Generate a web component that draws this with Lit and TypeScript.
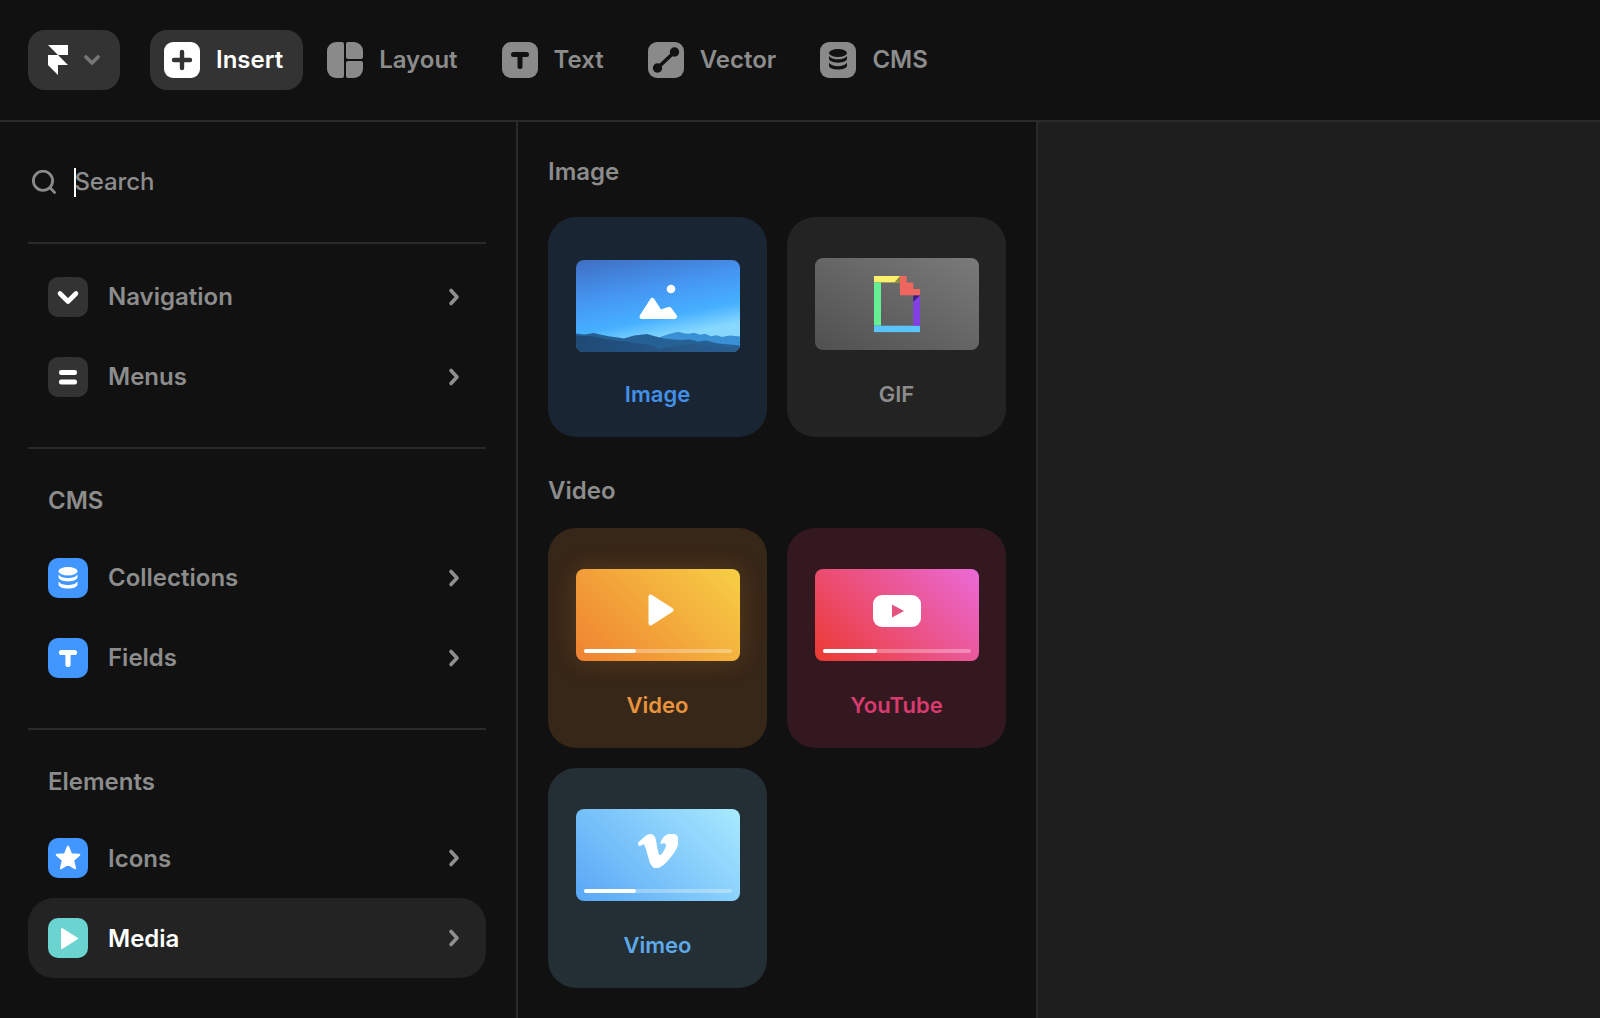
import { LitElement, html, css, svg } from "lit";
import { customElement } from "lit/decorators.js";

const db = svg`<ellipse cx="10" cy="4.2" rx="9.5" ry="4.2"/><path d="M.5 7.4C2 9.8 6 10.9 10 10.9S18 9.8 19.5 7.4V10.3C19.5 12.7 15 14.4 10 14.4S.5 12.7 .5 10.3Z"/><path d="M.5 14.6C2 17 6 18.1 10 18.1S18 17 19.5 14.6V17.5C19.5 19.9 15 21.6 10 21.6S.5 19.9 .5 17.5Z"/>`;
const dbIcon = (w: number, h: number) => html`<svg width=${w} height=${h} viewBox="0 0 20 22" fill="currentColor">${db}</svg>`;

const chevron = html`<svg class="chev" width="14" height="20" viewBox="0 0 14 20" fill="none" stroke="#8f8f8f" stroke-width="3.6" stroke-linecap="round" stroke-linejoin="round"><path d="M4 3.5l6 6.5-6 6.5"/></svg>`;

interface Row { label: string; tone: string; icon: unknown; active?: boolean }

const navIcon = html`<svg width="40" height="40" viewBox="0 0 40 40" fill="none" stroke="#fff" stroke-width="4.6" stroke-linecap="round" stroke-linejoin="round"><path d="M12 16.5l8 8 8-8"/></svg>`;
const menuIcon = html`<svg width="40" height="40" viewBox="0 0 40 40" fill="#fff"><rect x="11" y="13" width="18" height="5" rx="2.2"/><rect x="11" y="22.5" width="18" height="5" rx="2.2"/></svg>`;
const tIcon = html`<svg width="40" height="40" viewBox="0 0 40 40" fill="none" stroke="#fff" stroke-width="5.2" stroke-linecap="round"><path d="M13.5 14.5h13M20 14.5v12"/></svg>`;
const starIcon = html`<svg width="28" height="28" viewBox="0 0 24 24" fill="#fff" stroke="#fff" stroke-width="2" stroke-linejoin="round"><path d="M12 2.5l2.65 6.36 6.86.55-5.23 4.48 1.6 6.7L12 17l-5.88 3.59 1.6-6.7L2.49 9.41l6.86-.55z"/></svg>`;
const playIcon = html`<svg width="40" height="40" viewBox="0 0 40 40" fill="#fff" stroke="#fff" stroke-width="2" stroke-linejoin="round"><path d="M14 11v19l15-9.5z"/></svg>`;

const groups: { title?: string; rows: Row[] }[] = [
  { rows: [
    { label: "Navigation", tone: "dark", icon: navIcon },
    { label: "Menus", tone: "dark", icon: menuIcon },
  ] },
  { title: "CMS", rows: [
    { label: "Collections", tone: "blue", icon: dbIcon(20, 22) },
    { label: "Fields", tone: "blue", icon: tIcon },
  ] },
  { title: "Elements", rows: [
    { label: "Icons", tone: "blue", icon: starIcon },
    { label: "Media", tone: "teal", icon: playIcon, active: true },
  ] },
];

const imageArt = html`<svg class="art" viewBox="0 0 164 92" width="164" height="92">
  <defs>
    <linearGradient id="sky" x1="0" y1="0" x2="0.35" y2="1">
      <stop offset="0" stop-color="#3f6fc2"/><stop offset="0.42" stop-color="#4596f2"/><stop offset="0.72" stop-color="#46b0ff"/><stop offset="0.92" stop-color="#86d8ff"/>
    </linearGradient>
    <linearGradient id="front" x1="0" y1="0" x2="1" y2="0">
      <stop offset="0" stop-color="#1f4a76"/><stop offset="1" stop-color="#2a5f92"/>
    </linearGradient>
  </defs>
  <rect width="164" height="92" fill="url(#sky)"/>
  <path fill="#3a90d4" d="M84 77l9-3 9-2.300 6 1.500 5 .5 5-1 6 2 5-1 6 2.500 6-1 5 1.800 8-1.500 10 1V92H84z"/>
  <path fill="#266196" d="M0 73.500l8 1 10-1.500 6 1.500 10 2 8 1 6 1 10-3 13-1.500 7 2 10 2.500 9 1 7 .5 10-.5 8 2 8-1 12 3 22 2V92H0z"/>
  <path fill="url(#front)" d="M0 75.500l18 1 12 2.500 14 2 16 2 14 2 10 4 10-2 14-2 12-1 12 2 18 1 14-.5V92H0z"/>
  <path fill="#fff" stroke="#fff" stroke-width="5" stroke-linejoin="round" d="M66 56.500L76.300 40.500 84 52.500 93.300 49.500 98.500 56.500z"/>
  <circle cx="95" cy="29" r="4.300" fill="#fff"/>
</svg>`;

const gifArt = html`<svg class="art" viewBox="0 0 164 92" width="164" height="92">
  <defs>
    <linearGradient id="gifbg" x1="0" y1="1" x2="1" y2="0">
      <stop offset="0" stop-color="#505050"/><stop offset="1" stop-color="#7a7a7a"/>
    </linearGradient>
  </defs>
  <rect width="164" height="92" fill="url(#gifbg)"/>
  <rect x="59" y="18" width="26" height="6.400" fill="#fdf06a"/>
  <path d="M79.500 24.400L85 18v6.400z" fill="#8f8a3c"/>
  <rect x="59" y="24.400" width="7" height="43.300" fill="#66ee92"/>
  <rect x="59" y="67.700" width="46" height="6.400" fill="#5ac4ff"/>
  <rect x="98.300" y="37.300" width="6.700" height="30.400" fill="#8240e4"/>
  <path d="M98.300 43.800l6.700-6.500h-6.700z" fill="#3b1a7a"/>
  <path d="M85 18h6.700v6.400h6.600v6.500h6.700v6.400H85z" fill="#ef665f"/>
</svg>`;

const bar = (pct: number) => html`<div class="track"><div class="fill" style="width:${pct}%"></div></div>`;

const videoArt = html`<svg class="glyph play" width="26" height="32" viewBox="0 0 26 32" fill="#fff" stroke="#fff" stroke-width="4" stroke-linejoin="round"><path d="M2.500 2.500v27L23.500 16z"/></svg>${bar(35.500)}`;
const ytArt = html`<svg class="glyph yt" width="48" height="32" viewBox="0 0 48 32"><rect width="48" height="32" rx="9" fill="#fff"/><path d="M19 9.500v13L31 16z" fill="#e4527f"/></svg>${bar(36.500)}`;
const vimeoArt = html`<svg class="glyph" width="40" height="34" viewBox="0 1.500 24 21" fill="#fff" stroke="#fff" stroke-width="0.700" stroke-linejoin="round" preserveAspectRatio="none"><path d="M23.9765 6.4168c-.105 2.338-1.739 5.5429-4.894 9.6088-3.2679 4.247-6.0258 6.3699-8.2898 6.3699-1.409 0-2.578-1.294-3.553-3.881l-1.9179-7.1138c-.719-2.584-1.488-3.878-2.312-3.878-.179 0-.806.378-1.8809 1.132L0 7.2098c1.1811-1.0381 2.3451-2.0801 3.501-3.1279C5.08 2.7175 6.2696 1.9964 7.0616 1.9244c1.8679-.18 3.0179 1.1 3.4508 3.8387.4659 2.9541.7889 4.7921.9699 5.5131.5389 2.45 1.1309 3.674 1.7779 3.674.502 0 1.2569-.796 2.2649-2.385 1.004-1.589 1.5429-2.797 1.6149-3.628.144-1.371-.395-2.061-1.6149-2.061-.574 0-1.167.121-1.777.391 1.186-3.8679 3.434-5.7568 6.7619-5.6368 2.4729.06 3.6279 1.664 3.4979 4.7828z"/></svg>${bar(35.500)}`;

const plusIcon = html`<svg width="36" height="36" viewBox="0 0 36 36" fill="none"><rect width="36" height="36" rx="9" fill="#fff"/><path d="M18 10v16M10 18h16" stroke="#333" stroke-width="4.400" stroke-linecap="round"/></svg>`;
const layoutIcon = html`<svg width="36" height="36" viewBox="0 0 36 36" fill="#8a8a8a"><path d="M9 0h6a2 2 0 0 1 2 2v32a2 2 0 0 1-2 2H9a9 9 0 0 1-9-9V9a9 9 0 0 1 9-9z"/><path d="M21 0h6a9 9 0 0 1 9 9v6a2 2 0 0 1-2 2H21a2 2 0 0 1-2-2V2a2 2 0 0 1 2-2z"/><path d="M21 19h13a2 2 0 0 1 2 2v6a9 9 0 0 1-9 9h-6a2 2 0 0 1-2-2V21a2 2 0 0 1 2-2z"/></svg>`;
const textIcon = html`<svg width="36" height="36" viewBox="0 0 36 36" fill="none"><rect width="36" height="36" rx="9" fill="#8a8a8a"/><path d="M11.500 12.500h13M18 12.500v12" stroke="#111" stroke-width="5" stroke-linecap="round"/></svg>`;
const vectorIcon = html`<svg width="36" height="36" viewBox="0 0 36 36" fill="none"><rect width="36" height="36" rx="9" fill="#8a8a8a"/><path d="M9 26.500L26.500 10" stroke="#111" stroke-width="3.600"/><circle cx="9.500" cy="26" r="4.700" fill="#111"/><circle cx="26.500" cy="10" r="4.700" fill="#111"/></svg>`;
const cmsIcon = html`<svg width="36" height="36" viewBox="0 0 36 36"><rect width="36" height="36" rx="9" fill="#8a8a8a"/><g transform="translate(8.500 7) scale(.95)" fill="#111">${db}</g></svg>`;

const tools = [
  { label: "Insert", icon: plusIcon, active: true },
  { label: "Layout", icon: layoutIcon },
  { label: "Text", icon: textIcon },
  { label: "Vector", icon: vectorIcon },
  { label: "CMS", icon: cmsIcon },
];

@customElement("app-root")
export class AppRoot extends LitElement {
  static styles = css`
    :host { display: block; width: 100%; height: 100vh; overflow: hidden; background: #111; color: #8c8c8c;
      font-family: Inter, "Liberation Sans", sans-serif; font-size: 24px; font-weight: 600; line-height: 30px; }
    svg { display: block; flex: none; }
    .topbar { display: flex; align-items: center; height: 120px; padding-left: 28px; border-bottom: 2px solid #2a2a2a; box-sizing: content-box; }
    .logo { display: flex; align-items: center; gap: 16px; width: 92px; height: 60px; box-sizing: border-box; padding-left: 20px; background: #333; border-radius: 17px; margin-right: 30px; }
    .tools { display: flex; align-items: center; gap: 10px; }
    .tool { display: flex; align-items: center; gap: 16px; height: 60px; padding: 0 20px 0 14px; border-radius: 17px; }
    .tool.on { background: #333; color: #fff; }
    .body { display: flex; height: calc(100vh - 122px); }
    .side { flex: none; padding: 0 30px 0 28px; border-right: 2px solid #2a2a2a; box-sizing: content-box; width: 458px; }
    .search { display: flex; align-items: center; height: 120px; padding-left: 4px; font-weight: 500; letter-spacing: -.15px; }
    .caret { width: 2px; height: 29px; background: #fff; margin-left: 18px; margin-right: -1.500px; }
    .group { border-top: 2px solid #2a2a2a; padding-bottom: 30px; }
    .group.first { padding-top: 13px; }
    .group-title { padding: 37px 0 22px 20px; }
    .group:last-child .group-title { padding-bottom: 21px; }
    .group:last-child .row span { padding-top: 2px; }
    .row { display: flex; align-items: center; height: 80px; padding: 0 25px 0 20px; border-radius: 26px; }
    .row.on { background: #232323; color: #fff; }
    .row span { flex: 1; }
    .ic { width: 40px; height: 40px; border-radius: 10px; margin-right: 20px; display: flex; align-items: center; justify-content: center; color: #fff; flex: none; }
    .ic.dark { background: #333; }
    .ic.blue { background: #4196ff; }
    .ic.teal { background: #6bd3d0; }
    .panel { width: 458px; flex: none; padding: 35px 30px 0; border-right: 2px solid #2a2a2a; }
    .panel-title.top { margin-bottom: 30px; }
    .panel-title.next { margin: 39px 0 22px; }
    .grid { display: grid; grid-template-columns: 219px 219px; gap: 20px; }
    .card { height: 220px; border-radius: 28px; display: flex; flex-direction: column; align-items: center; padding-top: 41px; box-sizing: border-box; font-size: 22px; line-height: 28px; }
    .thumb { width: 164px; height: 92px; border-radius: 8px; overflow: hidden; position: relative; display: flex; justify-content: center; flex: none; }
    .thumb .glyph { margin-top: 25px; }
    .thumb .glyph.play { margin-left: 6px; }
    .thumb .glyph.yt { margin-top: 26px; }
    .card .name { margin-top: 30px; }
    .card.image { background: #1a2533; color: #4390e8; padding-top: 43px; }
    .card.image .name { margin-top: 28px; }
    .card.gif { background: #232323; color: #8c8c8c; }
    .card.gif .name { margin-top: 30px; }
    .card.video { background: #372718; color: #e8933e; }
    .card.video .thumb { background: linear-gradient(45deg, #ef8231, #f7cf45); box-shadow: 0 0 24px rgba(240, 150, 50, .18); overflow: visible; }
    .card.youtube { background: #33191f; color: #d93a70; }
    .card.youtube .thumb { background: linear-gradient(45deg, #ec3a31, #ea6ad8); }
    .card.vimeo { background: #232e35; color: #5ea9e8; }
    .card.vimeo .thumb { background: linear-gradient(45deg, #58a6f6, #a8eaff); }
    .track { position: absolute; left: 8px; right: 8px; bottom: 8px; height: 4px; border-radius: 2px; background: rgba(255, 255, 255, .3); }
    .fill { height: 100%; border-radius: 2px; background: #fff; }
    .canvas { flex: 1; background: #1e1e1e; }
  `;

  render() {
    return html`
      <div class="topbar">
        <div class="logo">
          <svg width="20" height="30" viewBox="0 0 20 30" fill="#fff"><path d="M0 0h20v10H10z"/><path d="M0 10h10l10 10H10v10L0 20z"/></svg>
          <svg width="16" height="10" viewBox="0 0 16 10" fill="none" stroke="#777" stroke-width="3.600" stroke-linecap="round" stroke-linejoin="round"><path d="M2 2l6 6 6-6"/></svg>
        </div>
        <div class="tools">
          ${tools.map((t) => html`<div class="tool ${t.active ? "on" : ""}">${t.icon}<span>${t.label}</span></div>`)}
        </div>
      </div>
      <div class="body">
        <div class="side">
          <div class="search">
            <svg width="24" height="24" viewBox="0 0 24 24" fill="none" stroke="#8a8a8a" stroke-width="2.800" stroke-linecap="round"><circle cx="11" cy="10.800" r="9.600"/><path d="M18.300 18l4.200 4.400"/></svg>
            <div class="caret"></div><span>Search</span>
          </div>
          ${groups.map((g, i) => html`
            <div class="group ${i === 0 ? "first" : ""}">
              ${g.title ? html`<div class="group-title">${g.title}</div>` : ""}
              ${g.rows.map((r) => html`<div class="row ${r.active ? "on" : ""}"><div class="ic ${r.tone}">${r.icon}</div><span>${r.label}</span>${chevron}</div>`)}
            </div>`)}
        </div>
        <div class="panel">
          <div class="panel-title top">Image</div>
          <div class="grid">
            <div class="card image"><div class="thumb">${imageArt}</div><div class="name">Image</div></div>
            <div class="card gif"><div class="thumb">${gifArt}</div><div class="name">GIF</div></div>
          </div>
          <div class="panel-title next">Video</div>
          <div class="grid">
            <div class="card video"><div class="thumb">${videoArt}</div><div class="name">Video</div></div>
            <div class="card youtube"><div class="thumb">${ytArt}</div><div class="name">YouTube</div></div>
            <div class="card vimeo"><div class="thumb">${vimeoArt}</div><div class="name">Vimeo</div></div>
          </div>
        </div>
        <div class="canvas"></div>
      </div>
    `;
  }
}
